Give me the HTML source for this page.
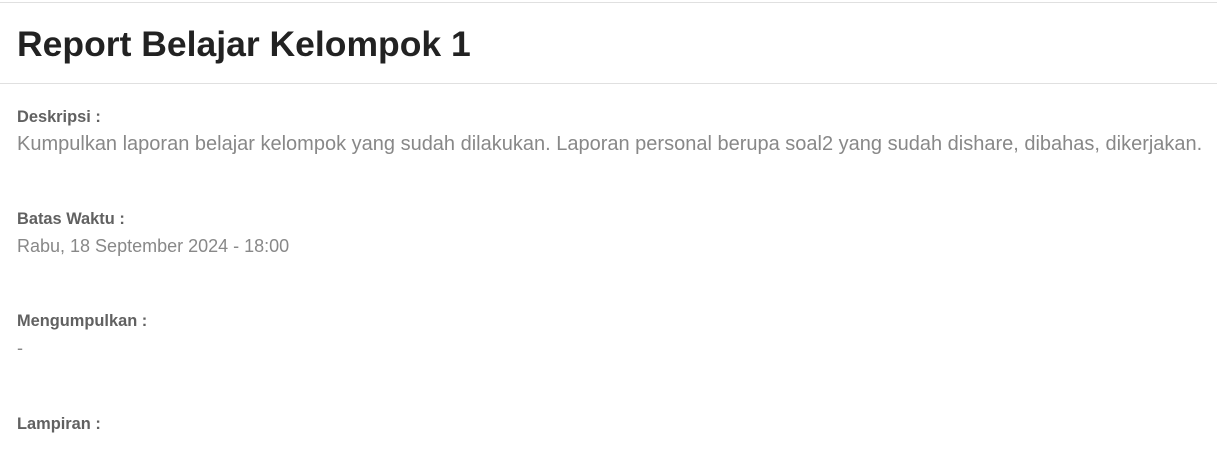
<!DOCTYPE html>
<html><head><meta charset="utf-8"><style>
body{margin:0;width:1217px;height:453px;background:#fff;font-family:"Liberation Sans",Arial,sans-serif;overflow:hidden;position:relative}
.l{position:absolute;left:0;width:1217px;height:1px;background:#e0e0e0}
.t{position:absolute;left:17px;white-space:nowrap;line-height:1}
h1{position:absolute;left:17px;top:27px;margin:0;font-size:35.5px;font-weight:bold;color:#222;line-height:1;white-space:nowrap}
.lab{font-size:16.4px;font-weight:bold;color:#616161}
.v{font-size:18px;color:#888}
</style></head><body>
<div class="l" style="top:2px"></div>
<h1>Report Belajar Kelompok 1</h1>
<div class="l" style="top:83px"></div>
<div class="t lab" style="top:109px">Deskripsi :</div>
<div class="t" style="top:134px;font-size:20px;color:#888">Kumpulkan laporan belajar kelompok yang sudah dilakukan. Laporan personal berupa soal2 yang sudah dishare, dibahas, dikerjakan.</div>
<div class="t lab" style="top:211px">Batas Waktu :</div>
<div class="t v" style="top:237px">Rabu, 18 September 2024 - 18:00</div>
<div class="t lab" style="top:313px">Mengumpulkan :</div>
<div class="t v" style="top:339px">-</div>
<div class="t lab" style="top:416px">Lampiran :</div>
</body></html>
